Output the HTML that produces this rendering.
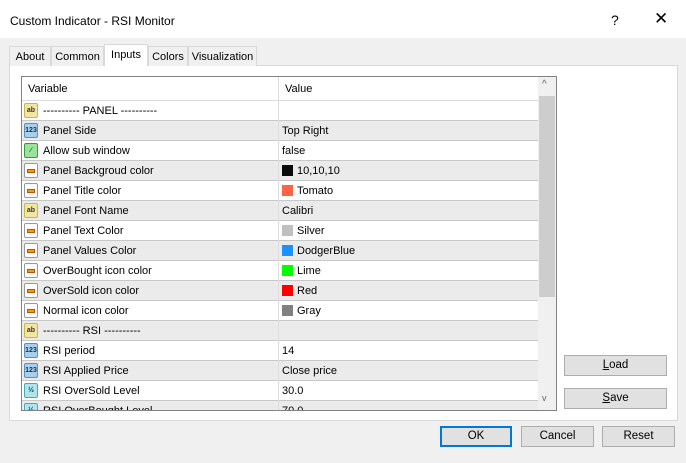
<!DOCTYPE html><html><head><style>
*{box-sizing:border-box;margin:0;padding:0}
body{width:686px;height:463px;background:#f0f0f0;font-family:"Liberation Sans",sans-serif;font-size:11px;color:#000;position:relative;overflow:hidden}
.a{position:absolute}
.title{left:0;top:0;width:686px;height:38px;background:#fff}
.tab{top:46px;height:20px;border:1px solid #d9d9d9;border-bottom:none;background:#f0f0f0;padding:4px 0 0;font-size:11px;text-align:center}
.panel{left:9px;top:65px;width:669px;height:356px;background:#fff;border:1px solid #d9d9d9}
.grid{left:21px;top:76px;width:536px;height:335px;border:1px solid #828282;background:#fff;overflow:hidden}
.row{position:absolute;left:0;width:516px;height:20px;border-bottom:1px solid #c8c8c8}
.row span{position:absolute;top:0;height:19px;line-height:20px;display:flex;align-items:center}
.c1{left:21px}.c2{left:260px}
.div{position:absolute;left:256px;top:0;width:1px;height:335px;background:#dcdcdc}
.ic{position:absolute;left:2px;top:2px;width:14px;height:15px;border-radius:2px;font-size:7px;line-height:14px;text-align:center;font-weight:bold}
.sw{display:inline-block;width:11px;height:11px;margin-right:4px}
.btn{height:21px;background:#e1e1e1;border:1px solid #adadad;text-align:center;line-height:19px;font-size:11.5px}
</style></head><body>
<div class="a title"></div>
<div class="a" style="left:10px;top:14px;font-size:12px">Custom Indicator - RSI Monitor</div>
<div class="a" style="left:611px;top:12px;font-size:14px">?</div>
<div class="a" style="left:654px;top:9px;font-size:17px;font-weight:300">✕</div>
<div class="a panel"></div>
<div class="a tab" style="left:9px;width:42px">About</div>
<div class="a tab" style="left:51px;width:53px">Common</div>
<div class="a tab" style="left:104px;top:44px;height:22px;width:44px;background:#fff;padding-top:4px">Inputs</div>
<div class="a tab" style="left:148px;width:40px">Colors</div>
<div class="a tab" style="left:188px;width:69px">Visualization</div>
<div class="a grid">
<div class="row" style="top:0;height:24px;border-bottom:1px solid #dcdcdc"><span style="left:6px;height:23px">Variable</span><span style="left:263px;height:23px">Value</span></div>
<div id="rows"></div>
<div class="div"></div>
<div style="position:absolute;left:516px;top:0;width:18px;height:333px;background:#f0f0f0"></div>
<div style="position:absolute;left:517px;top:19px;width:16px;height:201px;background:#cdcdcd"></div>
<div style="position:absolute;left:520px;top:2px;font-size:10px;color:#606060">&#94;</div>
<div style="position:absolute;left:520px;top:316px;font-size:9px;color:#606060">v</div>
</div>
<div class="a btn" style="left:564px;top:355px;width:103px"><u>L</u>oad</div>
<div class="a btn" style="left:564px;top:388px;width:103px"><u>S</u>ave</div>
<div class="a btn" style="left:440px;top:426px;width:72px;border:2px solid #0078d7;line-height:17px">OK</div>
<div class="a btn" style="left:521px;top:426px;width:73px">Cancel</div>
<div class="a btn" style="left:602px;top:426px;width:73px">Reset</div>
<script>
var R=[["ab","---------- PANEL ----------",""],["123","Panel Side","Top Right"],["g","Allow sub window","false"],["c","Panel Backgroud color","10,10,10","#0a0a0a"],["c","Panel Title color","Tomato","#ff6347"],["ab","Panel Font Name","Calibri"],["c","Panel Text Color","Silver","#c0c0c0"],["c","Panel Values Color","DodgerBlue","#1e90ff"],["c","OverBought icon color","Lime","#00ff00"],["c","OverSold icon color","Red","#ff0000"],["c","Normal icon color","Gray","#808080"],["ab","---------- RSI ----------",""],["123","RSI period","14"],["123","RSI Applied Price","Close price"],["h","RSI OverSold Level","30.0"],["h","RSI OverBought Level","70.0"]];
var h="";R.forEach(function(r,i){var t=24+i*20,bg=i%2?"#ebebeb":"#fff",ic;
if(r[0]=="ab")ic='<div class="ic" style="background:#f3e6a0;border:1px solid #c8b450;color:#333">ab</div>';
else if(r[0]=="123")ic='<div class="ic" style="background:#a9cfee;border:1px solid #5a8fc0;color:#134">123</div>';
else if(r[0]=="g")ic='<div class="ic" style="background:#9be39b;border:1px solid #3a9a3a;color:#063">&#8725;</div>';
else if(r[0]=="h")ic='<div class="ic" style="background:#aee6ee;border:1px solid #4aa8b8;color:#134">½</div>';
else ic='<div class="ic" style="background:#fff;border:1px solid #999"><div style="position:absolute;left:2px;top:5px;width:8px;height:4px;background:#f5a000;border:1px solid #c05000"></div></div>';
var v=r[3]?'<i class="sw" style="background:'+r[3]+'"></i>'+r[2]:r[2];
h+='<div class="row" style="top:'+t+'px;background:'+bg+'">'+ic+'<span class="c1">'+r[1]+'</span><span class="c2">'+v+'</span></div>';});
document.getElementById("rows").innerHTML=h;
</script>
</body></html>
